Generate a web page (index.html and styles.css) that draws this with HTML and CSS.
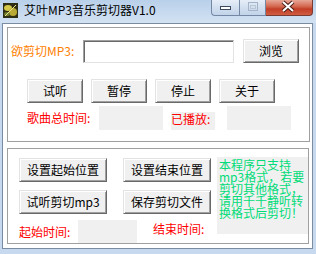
FILE: index.html
```html
<!DOCTYPE html>
<html lang="zh-CN">
<head>
    <meta charset="UTF-8">
    <title>艾叶MP3音乐剪切器V1.0</title>
    <link rel="stylesheet" href="styles.css">
</head>
<body>
    <div class="window">
        <!-- 标题栏 -->
        <div class="titlebar">
            <svg class="app-icon" width="15" height="15" viewBox="0 0 15 15">
                <rect width="15" height="15" fill="#2e2e14"/>
                <ellipse cx="5" cy="5" rx="4" ry="3" fill="#d6c94a"/>
                <ellipse cx="10" cy="9" rx="4" ry="4" fill="#b9a936"/>
                <ellipse cx="4" cy="11" rx="3" ry="2" fill="#6f7a2a"/>
                <path d="M2 13 L13 2" stroke="#f1e68a" stroke-width="1"/>
            </svg>
            <span class="title">艾叶MP3音乐剪切器V1.0</span>
            <div class="caption-buttons">
                <span class="cap cap-min">
                    <svg width="26" height="14" viewBox="0 0 26 14">
                        <rect x="8.5" y="6.5" width="10" height="3" fill="#fff" stroke="#3b4a5e"/>
                    </svg>
                </span>
                <span class="cap cap-max">
                    <svg width="25" height="14" viewBox="0 0 25 14">
                        <rect x="8.5" y="2.5" width="9" height="8" fill="none" stroke="#a4b3c7"/>
                        <rect x="10.5" y="5.5" width="5" height="3" fill="none" stroke="#b9c6d6"/>
                    </svg>
                </span>
                <span class="cap cap-close">
                    <svg width="45" height="14" viewBox="0 0 45 14">
                        <path d="M17 2 L27 11 M27 2 L17 11" stroke="#4a1f18" stroke-width="4"/>
                        <path d="M17 2 L27 11 M27 2 L17 11" stroke="#fff" stroke-width="2"/>
                    </svg>
                </span>
            </div>
        </div>

        <div class="client">
            <!-- 播放区 -->
            <div class="group group-play">
                <div class="file-row">
                    <span class="label label-file">欲剪切MP3:</span>
                    <input class="textbox" type="text">
                    <button class="btn btn-browse">浏览</button>
                </div>
                <div class="play-buttons">
                    <button class="btn">试听</button>
                    <button class="btn">暂停</button>
                    <button class="btn">停止</button>
                    <button class="btn">关于</button>
                </div>
                <div class="time-row">
                    <span class="label red total-label">歌曲总时间:</span>
                    <span class="value-box"></span>
                    <span class="label red played-label">已播放:</span>
                    <span class="value-box played-box"></span>
                </div>
            </div>

            <!-- 剪切区 -->
            <div class="group group-cut">
                <div class="cut-left">
                    <div class="cut-buttons">
                        <button class="btn btn-wide">设置起始位置</button>
                        <button class="btn btn-wide">设置结束位置</button>
                        <button class="btn btn-wide">试听剪切mp3</button>
                        <button class="btn btn-wide">保存剪切文件</button>
                    </div>
                    <div class="cut-times">
                        <span class="label red start-label">起始时间:</span>
                        <span class="value-box start-box"></span>
                        <span class="label red end-label">结束时间:</span>
                    </div>
                </div>
                <div class="notice">本程序只支持<br>mp3格式，若要<br>剪切其他格式，<br>请用千千静听转<br>换格式后剪切！</div>
            </div>
        </div>
    </div>
</body>
</html>
```

FILE: styles.css
```css
* {
    box-sizing: border-box;
}

body {
    margin: 0;
    width: 316px;
    height: 254px;
    overflow: hidden;
    background: #c6d9ee;
    font-family: "Noto Sans CJK SC", "DejaVu Sans", sans-serif;
    font-size: 12px;
    color: #000;
}

.titlebar {
    height: 23px;
    display: flex;
    align-items: flex-start;
    background: linear-gradient(#b9d0ea, #d3e2f3);
}

.app-icon {
    margin: 3px 0 0 3px;
}

.title {
    margin: 2px 0 0 6px;
    line-height: 16px;
    font-size: 12px;
}

.caption-buttons {
    margin-left: auto;
    margin-right: 3px;
    display: flex;
}

.cap {
    height: 16px;
    border: 1px solid #7488a4;
    border-top: none;
    display: flex;
}

.cap-min {
    width: 28px;
    border-right: none;
    border-bottom-left-radius: 4px;
    background: linear-gradient(#e6eef8, #d2dfef 50%, #c2d4ea);
}

.cap-max {
    width: 27px;
    background: linear-gradient(#e6eef8, #d2dfef 50%, #c2d4ea);
}

.cap-close {
    width: 47px;
    border-color: #7a3b33;
    border-left: none;
    border-bottom-right-radius: 4px;
    background: linear-gradient(#e7a797, #d2644b 45%, #c23d26 60%, #cf5e43);
}

.client {
    margin: 0 3px 0 2px;
    height: 226px;
    background: #fff;
    border: 1px solid #7b8ba0;
    padding: 3px 0 0 4px;
}

.group {
    border: 1px solid #a0a0a0;
}

.label {
    white-space: nowrap;
    line-height: 14px;
}

.red {
    color: #ff0000;
}

.btn {
    font-family: inherit;
    font-size: 12px;
    color: #000;
    background: #f0f0f0;
    border: 1px solid;
    border-color: #e3e3e3 #696969 #696969 #e3e3e3;
    box-shadow: inset 1px 1px 0 #fff, inset -1px -1px 0 #a0a0a0;
    padding: 0;
    width: 56px;
    height: 24px;
    line-height: 20px;
}

.value-box {
    display: block;
    width: 64px;
    height: 24px;
    background: #f0f0f0;
}

/* 播放区 */
.group-play {
    width: 303px;
    height: 115px;
    padding: 11px 0 0 3px;
}

.file-row {
    display: flex;
    align-items: center;
    height: 24px;
}

.label-file {
    width: 72px;
    color: #ff8000;
}

.textbox {
    width: 151px;
    height: 23px;
    border: 1px solid;
    border-color: #a0a0a0 #e3e3e3 #e3e3e3 #a0a0a0;
    box-shadow: inset 1px 1px 0 #696969;
    background: #fff;
    margin: 0;
}

.btn-browse {
    margin-left: 9px;
}

.play-buttons {
    display: flex;
    gap: 8px;
    margin-top: 16px;
    padding-left: 16px;
}

.time-row {
    display: flex;
    align-items: center;
    margin-top: 3px;
    padding-left: 16px;
    height: 24px;
}

.total-label {
    width: 72px;
}

.played-label {
    align-self: flex-end;
    width: 44px;
    height: 18px;
    margin-left: 8px;
    background: #f0f0f0;
}

.played-box {
    margin-left: 12px;
}

/* 剪切区 */
.group-cut {
    width: 302px;
    height: 96px;
    margin-top: 6px;
    padding: 9px 0 0 11px;
    display: flex;
    align-items: flex-start;
}

.cut-left {
    flex: none;
    width: 192px;
}

.cut-buttons {
    display: grid;
    grid-template-columns: 88px 88px;
    gap: 8px 16px;
}

.btn-wide {
    width: 88px;
}

.cut-times {
    display: flex;
    align-items: center;
    margin-top: 6px;
    height: 23px;
}

.start-label {
    width: 64px;
}

.start-box {
    height: 23px;
}

.end-label {
    position: relative;
    z-index: 1;
    align-self: flex-start;
    width: 63px;
    height: 15px;
    margin-left: 16px;
    padding-top: 2px;
    background: #fff;
}

.notice {
    flex: none;
    width: 91px;
    height: 77px;
    margin: -1px 0 0 6px;
    padding: 2px 0 0 2px;
    background: #f0f0f0;
    color: #00dc78;
    line-height: 12px;
    white-space: nowrap;
}
```
